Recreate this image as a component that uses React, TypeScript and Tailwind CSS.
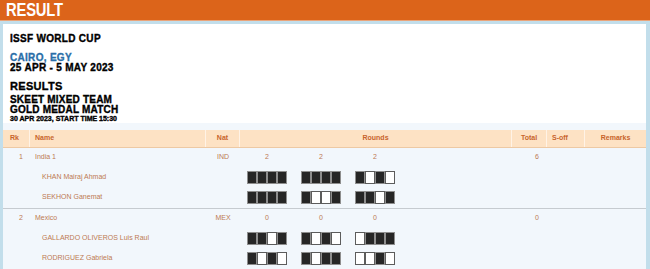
import React from "react";

interface IMember {
  name: string;
  shots: string[];
}
interface ITeam {
  rk: number;
  name: string;
  nat: string;
  rounds: number[];
  total: number;
  members: IMember[];
}

const TEAMS: ITeam[] = [
  {
    rk: 1,
    name: "India 1",
    nat: "IND",
    rounds: [2, 2, 2],
    total: 6,
    members: [
      { name: "KHAN Mairaj Ahmad", shots: ["1111", "1111", "1010"] },
      { name: "SEKHON Ganemat", shots: ["1111", "1001", "1101"] },
    ],
  },
  {
    rk: 2,
    name: "Mexico",
    nat: "MEX",
    rounds: [0, 0, 0],
    total: 0,
    members: [
      { name: "GALLARDO OLIVEROS Luis Raul", shots: ["1101", "1010", "0111"] },
      { name: "RODRIGUEZ Gabriela", shots: ["1010", "1011", "0010"] },
    ],
  },
];

const heavy =
  "font-['Liberation_Sans',Arial,sans-serif] font-bold text-black [-webkit-text-stroke:0.35px_#000]";

const ShotBox = ({ hit }: { hit: boolean }) => (
  <div
    className={
      hit
        ? "w-[10px] h-[13px] bg-[#262626] border border-[#8e8e8e]"
        : "w-[10px] h-[13px] bg-white border border-[#5c5c5c]"
    }
  />
);

export default function App() {
  const cols = "grid grid-cols-[27px_176px_34px_272px_35px_38px_61px]";

  const renderTeam = (t: ITeam) => (
    <div key={t.rk} className="border-b border-[#c6cbd0]">
      <div className={`${cols} h-[19px] items-center`}>
        <div className="pl-[16px]">{t.rk}</div>
        <div className="pl-[5px]">{t.name}</div>
        <div className="text-center">{t.nat}</div>
        <div className="flex">
          {t.rounds.map((r, i) => (
            <div key={i} className="w-[54px] text-center">
              {r}
            </div>
          ))}
        </div>
        <div className="text-right pr-[8px]">{t.total}</div>
        <div />
        <div />
      </div>
      {t.members.map((m, mi) => (
        <div
          key={m.name}
          className={`${cols} ${mi === 0 ? "h-[20px]" : "h-[21px]"} items-center`}
        >
          <div />
          <div className="pl-[12px]">{m.name}</div>
          <div />
          <div className="flex">
            {m.shots.map((s, si) => (
              <div key={si} className="w-[54px] flex justify-center">
                {s.split("").map((c, ci) => (
                  <ShotBox key={ci} hit={c === "1"} />
                ))}
              </div>
            ))}
          </div>
          <div />
          <div />
          <div />
        </div>
      ))}
    </div>
  );

  return (
    <div className="w-[650px] h-[269px] overflow-hidden bg-[#f2f7fc] font-['Liberation_Sans',Arial,sans-serif]">
      <div className="h-[21px] bg-[#dc641a] pl-[6px] border-b border-[#e9a47a]">
        <div className="text-white text-[18px] leading-[21px] origin-left scale-x-[0.82] font-bold tracking-[-0.2px]">
          RESULT
        </div>
      </div>
      <div className="border-l-[3px] border-r-[4px] border-t-[3px] border-[#c2deeb] h-[248px]">
        <div className="bg-white pl-[7px] pt-[9px] h-[99px]">
          <div className={`${heavy} text-[10px] leading-[12px] tracking-[0.3px]`}>
            ISSF WORLD CUP
          </div>
          <div className="mt-[8px] text-[10px] leading-[10px] font-bold text-[#2a6ea8] tracking-[0.3px] [-webkit-text-stroke:0.3px_#2a6ea8]">
            CAIRO, EGY
          </div>
          <div className={`${heavy} text-[10px] leading-[10px] tracking-[0.3px]`}>
            25 APR - 5 MAY 2023
          </div>
          <div className={`${heavy} mt-[7px] text-[11px] leading-[13px] tracking-[0.3px]`}>
            RESULTS
          </div>
          <div className={`${heavy} mt-[2px] text-[10px] leading-[10px] tracking-[0.2px]`}>
            SKEET MIXED TEAM
          </div>
          <div className={`${heavy} text-[10px] leading-[10px] tracking-[0.2px]`}>
            GOLD MEDAL MATCH
          </div>
          <div className={`${heavy} text-[7px] leading-[8px] [-webkit-text-stroke:0.2px_#000]`}>
            30 APR 2023, START TIME 15:30
          </div>
        </div>
        <div className="mt-[7px] text-[7px] text-[#bd7a52]">
          <div
            className={`${cols} h-[18px] items-center bg-[#fde2c4] border-b border-[#edc9a4] text-[#c8642c] font-bold`}
          >
            <div className="pl-[7px] h-full flex items-center border-r border-[#fff3e6]">Rk</div>
            <div className="pl-[5px] h-full flex items-center border-r border-[#fff3e6]">Name</div>
            <div className="h-full flex items-center justify-center border-r border-[#fff3e6]">Nat</div>
            <div className="h-full flex items-center justify-center border-r border-[#fff3e6]">Rounds</div>
            <div className="h-full flex items-center justify-center border-r border-[#fff3e6]">Total</div>
            <div className="pl-[5px] h-full flex items-center border-r border-[#fff3e6]">S-off</div>
            <div className="h-full flex items-center justify-center">Remarks</div>
          </div>
          {TEAMS.map(renderTeam)}
        </div>
      </div>
    </div>
  );
}
